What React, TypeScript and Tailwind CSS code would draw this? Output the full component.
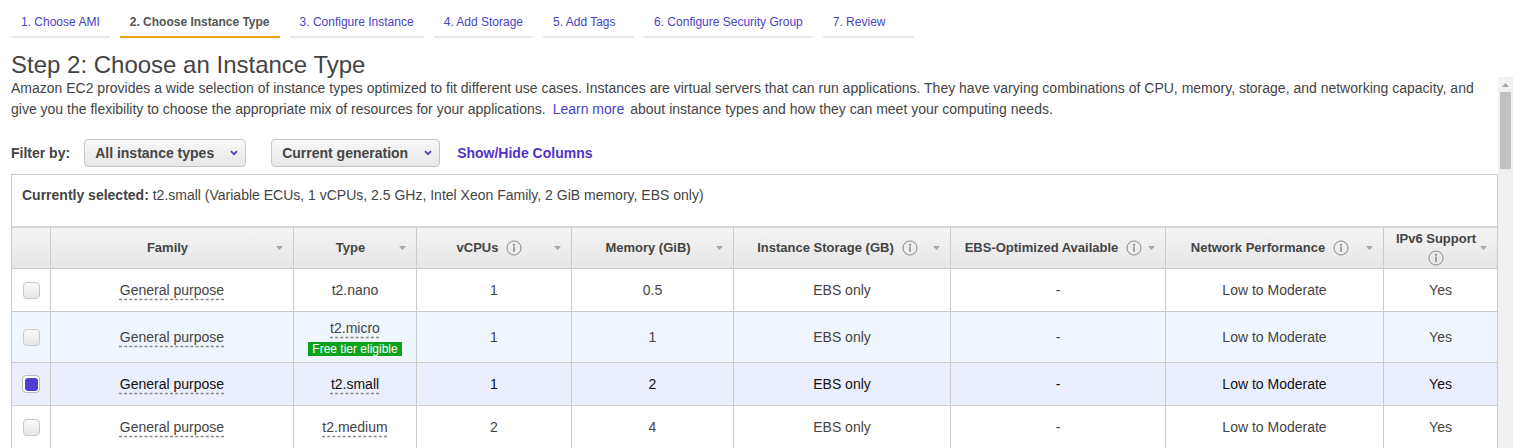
import React from "react";

const steps = [
  "1. Choose AMI",
  "2. Choose Instance Type",
  "3. Configure Instance",
  "4. Add Storage",
  "5. Add Tags",
  "6. Configure Security Group",
  "7. Review",
];

const gridCols =
  "grid grid-cols-[38px_243px_123px_155px_162px_217px_215px_218px_114px]";

const rows = [
  { type: "t2.nano", vcpu: "1", mem: "0.5", dashedType: false },
  { type: "t2.micro", vcpu: "1", mem: "1", dashedType: true, free: true },
  { type: "t2.small", vcpu: "1", mem: "2", dashedType: true, selected: true },
  { type: "t2.medium", vcpu: "2", mem: "4", dashedType: true },
];

const InfoIcon = () => (
  <svg width="16" height="16" viewBox="0 0 16 16" className="shrink-0">
    <circle cx="8" cy="8" r="7" fill="none" stroke="#8a8a8a" strokeWidth="1" />
    <circle cx="8" cy="4.7" r="0.95" fill="#777" />
    <rect x="7.35" y="6.6" width="1.3" height="5.2" fill="#777" />
  </svg>
);

const SortCaret = () => (
  <svg width="7" height="4" viewBox="0 0 7 4" className="absolute right-[10px] top-1/2 -translate-y-1/2">
    <path d="M0 0h7L3.5 4z" fill="#a8a8a8" />
  </svg>
);

const Chevron = () => (
  <svg width="8" height="6" viewBox="0 0 8 6" className="shrink-0">
    <path d="M1 1.2l3 3 3-3" stroke="#4b3fcc" strokeWidth="1.8" fill="none" />
  </svg>
);

const HeaderCell = ({
  label,
  info,
  wrap,
}: {
  label?: string;
  info?: boolean;
  wrap?: boolean;
}) => (
  <div className="relative flex items-center justify-center border-l border-[#cccccc] pr-[9px]">
    {label && (
      <div className={wrap ? "flex flex-col items-center gap-[3px]" : "flex items-center gap-[8px]"}>
        <span className="text-[13px] font-bold leading-[16px] text-[#444]">{label}</span>
        {info && <InfoIcon />}
      </div>
    )}
    {label && <SortCaret />}
  </div>
);

const Dropdown = ({ label, width }: { label: string; width: string }) => (
  <div
    className={`flex h-[28px] ${width} items-center justify-between rounded-[4px] border border-[#c6c6c6] bg-linear-to-b from-[#f8f8f8] to-[#e8e8e8] pl-[10px] pr-[7px]`}
  >
    <span className="text-[14px] font-bold text-[#444]">{label}</span>
    <Chevron />
  </div>
);

const Checkbox = ({ checked }: { checked?: boolean }) =>
  checked ? (
    <div className="h-[18px] w-[18px] rounded-[4px] border border-[#bdbdbd] bg-white p-[1.5px]">
      <div className="h-full w-full rounded-[3px] bg-[#4f3dd2]" />
    </div>
  ) : (
    <div className="h-[17px] w-[17px] rounded-[4px] border border-[#c9c9c9] bg-linear-to-b from-[#fafafa] to-[#e6e6e6]" />
  );

const Cell = ({ children }: { children: React.ReactNode }) => (
  <div className="flex flex-col items-center justify-center border-l border-[#cccccc]">
    {children}
  </div>
);

export default function App() {
  return (
    <div className="flex bg-white pl-[11px] font-['Liberation_Sans',Arial,sans-serif] text-[#444]">
      <div className="w-[1487px] shrink-0">
        {/* wizard steps */}
        <div className="flex gap-[10px] pt-[14px]">
          {steps.map((s, i) => (
            <div
              key={s}
              className={
                i === 1
                  ? "min-w-[91px] border-b-2 border-[#f0a20a] px-[10px] pb-[6px] text-[12px] font-bold leading-[16px] text-[#555]"
                  : "min-w-[91px] border-b-2 border-[#e8e8e8] px-[10px] pb-[6px] text-[12px] leading-[16px] text-[#4a42c7]"
              }
            >
              {s}
            </div>
          ))}
        </div>

        <h1 className="mt-[14px] text-[24px] leading-[26px] text-[#444]">
          Step 2: Choose an Instance Type
        </h1>
        <div className="text-[14px] leading-[21px] text-[#444]">
          <p>
            Amazon EC2 provides a wide selection of instance types optimized to fit different use cases.
            Instances are virtual servers that can run applications. They have varying combinations of CPU,
            memory, storage, and networking capacity, and
          </p>
          <p className="flex">
            <span>give you the flexibility to choose the appropriate mix of resources for your applications.</span>
            <span className="ml-[7px] text-[#4a42c7]">Learn more</span>
            <span className="ml-[6px]">about instance types and how they can meet your computing needs.</span>
          </p>
        </div>

        {/* filters */}
        <div className="mt-[19px] flex h-[28px] items-center">
          <span className="text-[14px] font-bold text-[#444]">Filter by:</span>
          <div className="ml-[14px]">
            <Dropdown label="All instance types" width="w-[162px]" />
          </div>
          <div className="ml-[25px]">
            <Dropdown label="Current generation" width="w-[169px]" />
          </div>
          <span className="ml-[17px] text-[14px] font-bold text-[#5233cc]">Show/Hide Columns</span>
        </div>

        {/* table */}
        <div className="mt-[7px] border border-[#cccccc]">
          <div className="h-[51px] pl-[10px] pt-[10px] text-[14px] leading-[20px] text-[#444]">
            <span className="font-bold">Currently selected:</span> t2.small (Variable ECUs, 1 vCPUs, 2.5
            GHz, Intel Xeon Family, 2 GiB memory, EBS only)
          </div>

          <div
            className={`${gridCols} h-[42px] border-t-2 border-[#d6d6d6] bg-linear-to-b from-[#f4f4f4] to-[#e6e6e6]`}
          >
            <div />
            <HeaderCell label="Family" />
            <HeaderCell label="Type" />
            <HeaderCell label="vCPUs" info />
            <HeaderCell label="Memory (GiB)" />
            <HeaderCell label="Instance Storage (GB)" info />
            <HeaderCell label="EBS-Optimized Available" info />
            <HeaderCell label="Network Performance" info />
            <HeaderCell label="IPv6 Support" info wrap />
          </div>

          {rows.map((r) => (
            <div
              key={r.type}
              className={`${gridCols} border-t border-[#cccccc] text-[14px] leading-[18px] ${
                r.free ? "h-[51px]" : "h-[43px]"
              } ${r.selected ? "bg-[#ebeefc] text-[#111]" : r.free ? "bg-[#f0f6fd]" : "bg-white"}`}
            >
              <div className="flex items-center justify-center">
                <Checkbox checked={r.selected} />
              </div>
              <Cell>
                <span className="underline decoration-[#8a8a8a] decoration-dashed underline-offset-[4px]">
                  General purpose
                </span>
              </Cell>
              <Cell>
                <span
                  className={
                    r.dashedType
                      ? "underline decoration-[#8a8a8a] decoration-dashed underline-offset-[4px]"
                      : ""
                  }
                >
                  {r.type}
                </span>
                {r.free && (
                  <span className="mt-[5px] bg-[#0ba21d] px-[4px] text-[12px] leading-[14px] text-white">
                    Free tier eligible
                  </span>
                )}
              </Cell>
              <Cell>{r.vcpu}</Cell>
              <Cell>{r.mem}</Cell>
              <Cell>EBS only</Cell>
              <Cell>-</Cell>
              <Cell>Low to Moderate</Cell>
              <Cell>Yes</Cell>
            </div>
          ))}
        </div>
      </div>

      {/* page scrollbar */}
      <div className="mt-[77px] flex w-[15px] shrink-0 flex-col bg-[#f1f1f1]">
        <div className="flex h-[15px] items-center justify-center">
          <svg width="7" height="4" viewBox="0 0 7 4">
            <path d="M3.5 0L7 4H0z" fill="#a3a3a3" />
          </svg>
        </div>
        <div className="mx-[2px] h-[77px] bg-[#c1c1c1]" />
      </div>
    </div>
  );
}
